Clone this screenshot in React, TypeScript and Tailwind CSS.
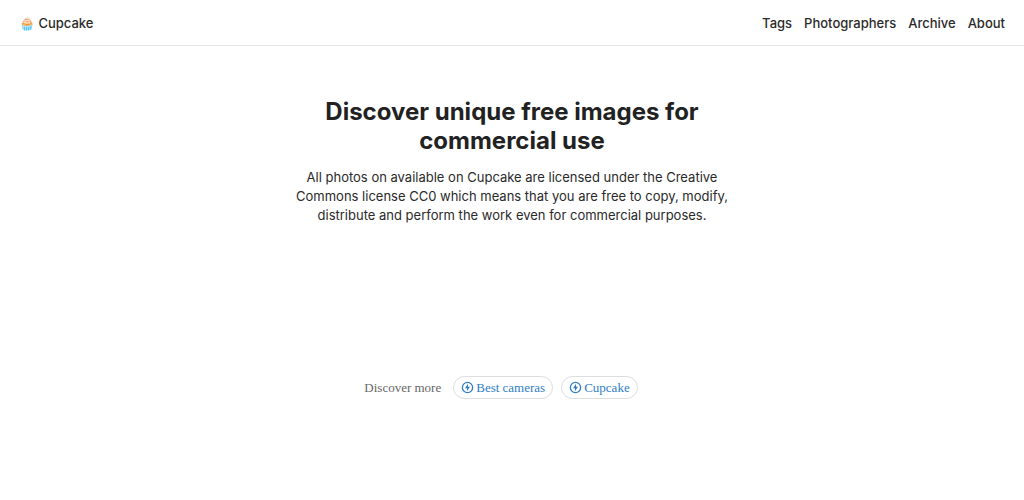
const navLinks = ["Tags", "Photographers", "Archive", "About"];

const discoverLinks = ["Best cameras", "Cupcake"];

function BoltCircleIcon() {
    return (
        <svg width="13" height="13" viewBox="0 0 24 24" aria-hidden="true">
            <circle cx="12" cy="12" r="9.5" fill="none" stroke="currentColor" strokeWidth="2.4" />
            <path d="M13 5v5.5h3.5L11 19v-5.5H7.5z" fill="currentColor" />
        </svg>
    );
}

export default function App() {
    return (
        <div className="min-h-screen bg-white font-['Inter',sans-serif] text-[13px] text-[#2a2a2a]">
            <header className="flex h-[46px] items-center justify-between border-b border-[#e5e5e5] px-[19px] pt-[2px] font-medium">
                <a href="#">🧁 Cupcake</a>
                <nav className="flex gap-3">
                    {navLinks.map((label) => (
                        <a key={label} href="#">
                            {label}
                        </a>
                    ))}
                </nav>
            </header>

            <main className="flex flex-col items-center px-5 pt-[51px] text-center">
                <h1 className="max-w-[440px] text-2xl leading-[29px] font-bold text-[#222]">
                    Discover unique free images for commercial use
                </h1>
                <p className="mt-[13px] max-w-[440px] leading-[19px]">
                    All photos on available on Cupcake are licensed under the Creative Commons
                    license CC0 which means that you are free to copy, modify, distribute and
                    perform the work even for commercial purposes.
                </p>

                <div className="mt-[151px] flex items-center pr-[22px] font-['Liberation_Serif',serif]">
                    <span className="mr-3 text-[#666]">Discover more</span>
                    <div className="flex gap-2">
                        {discoverLinks.map((label) => (
                            <a
                                key={label}
                                href="#"
                                className="flex h-[23px] items-center gap-[2px] rounded-full border border-[#ddd] px-[7px] text-[#2f7dc4]"
                            >
                                <BoltCircleIcon />
                                {label}
                            </a>
                        ))}
                    </div>
                </div>
            </main>
        </div>
    );
}
